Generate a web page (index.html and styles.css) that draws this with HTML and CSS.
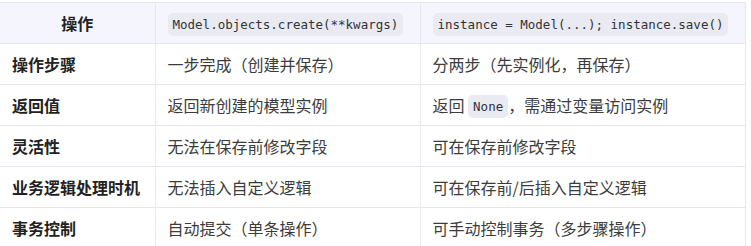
FILE: index.html
```html
<!DOCTYPE html>
<html lang="zh">
<head>
<meta charset="utf-8">
<link rel="stylesheet" href="styles.css">
</head>
<body>
<table class="cmp">
  <colgroup>
    <col class="c1"><col class="c2"><col class="c3">
  </colgroup>
  <thead>
    <tr>
      <th class="h1">操作</th>
      <th><code>Model.objects.create(**kwargs)</code></th>
      <th><code>instance = Model(...); instance.save()</code></th>
    </tr>
  </thead>
  <tbody>
    <tr><td class="k">操作步骤</td><td>一步完成（创建并保存）</td><td>分两步（先实例化，再保存）</td></tr>
    <tr><td class="k">返回值</td><td>返回新创建的模型实例</td><td>返回 <code>None</code>，需通过变量访问实例</td></tr>
    <tr><td class="k">灵活性</td><td>无法在保存前修改字段</td><td>可在保存前修改字段</td></tr>
    <tr><td class="k">业务逻辑处理时机</td><td>无法插入自定义逻辑</td><td>可在保存前/后插入自定义逻辑</td></tr>
    <tr><td class="k">事务控制</td><td>自动提交（单条操作）</td><td>可手动控制事务（多步骤操作）</td></tr>
  </tbody>
</table>
</body>
</html>
```
FILE: styles.css
```css
html, body {
  margin: 0;
  padding: 0;
  background: #ffffff;
}
body {
  padding-top: 2px;
  font-family: "Noto Sans CJK SC", "Noto Sans", sans-serif;
  font-size: 16px;
  color: #3c3c3c;
}
.cmp {
  border-collapse: collapse;
  table-layout: fixed;
  width: 745px;
}
.c1 { width: 155px; }
.c2 { width: 265px; }
.c3 { width: 325px; }
.cmp th, .cmp td {
  border: 1px solid #e6e6ef;
  padding: 0 12px;
  height: 40px;
  line-height: 20px;
  text-align: left;
  vertical-align: middle;
  white-space: nowrap;
  overflow: hidden;
}
.cmp th:first-child, .cmp td:first-child {
  border-left: 0;
}
.cmp thead th {
  background: #f5f5fd;
  font-weight: 700;
  color: #222;
}
.cmp th.h1 {
  text-align: center;
}
.cmp td.k {
  font-weight: 700;
  color: #222;
}
code {
  font-family: "DejaVu Sans Mono", "Liberation Mono", monospace;
  font-size: 12.5px;
  line-height: 1;
  background: #eaeaf3;
  border-radius: 5px;
  padding: 4px 5px;
  color: #333;
  font-weight: 400;
  vertical-align: 1px;
}
```
